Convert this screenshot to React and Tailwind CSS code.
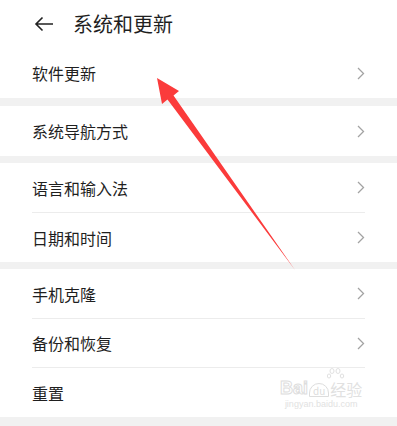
import React from "react";

const groups = [
  [["软件更新", 50]],
  [["系统导航方式", 50]],
  [["语言和输入法", 50], ["日期和时间", 49]],
  [["手机克隆", 50], ["备份和恢复", 49], ["重置", 49]],
];

const Chevron = () => (
  <svg width="8" height="13" viewBox="0 0 8 13" fill="none">
    <path d="M1 1l5.5 5.5L1 12" stroke="#a3a3a3" strokeWidth="1.3" />
  </svg>
);

const Row = ({ label, h, last }) => (
  <div className="px-8">
    <div
      className={`flex items-center justify-between ${
        h === 50 ? "h-[50px]" : "h-[49px]"
      } ${last ? "" : "border-b border-[#ececec]"}`}
    >
      <span className="text-[16px] text-[#1f1f1f]">{label}</span>
      {label !== "重置" && <Chevron />}
    </div>
  </div>
);

export default function App() {
  return (
    <div
      className="relative w-[397px] h-[426px] overflow-hidden bg-[#f1f1f1]"
      style={{ fontFamily: '"Noto Sans CJK SC", "Noto Sans", sans-serif' }}
    >
      <div className="bg-white h-[48px] flex items-center pl-[34px]">
        <svg width="20" height="16" viewBox="0 0 20 16" fill="none">
          <path d="M19 8H2M8.5 1.5L2 8l6.5 6.5" stroke="#222" strokeWidth="1.6" />
        </svg>
        <span className="ml-[19px] text-[20px] text-[#1f1f1f]">系统和更新</span>
      </div>

      <div className="flex flex-col">
        {groups.map((g, i) => (
          <div
            key={i}
            className={`bg-white ${i === 0 ? "" : i === 1 ? "mt-[8px]" : "mt-[7px]"}`}
          >
            {g.map(([label, h], j) => (
              <Row key={label} label={label} h={h} last={j === g.length - 1} />
            ))}
          </div>
        ))}
      </div>

      {/* red annotation arrow */}
      <svg
        className="absolute left-0 top-0 pointer-events-none"
        width="397"
        height="426"
        viewBox="0 0 397 426"
      >
        <polygon
          points="157,78 179,91 173.5,95.5 295,270 167.5,99.5 162,104"
          fill="#fb3b3b"
        />
      </svg>

      {/* watermark */}
      <div className="absolute left-[280px] top-[368px] flex flex-col items-center pointer-events-none opacity-50">
        <svg width="18" height="14" viewBox="0 0 18 14" className="ml-[30px] mb-[-3px]" fill="none" stroke="#c4c4c4" strokeWidth="1">
          <ellipse cx="5" cy="3" rx="2" ry="2.5" />
          <ellipse cx="11" cy="3" rx="2" ry="2.5" />
          <ellipse cx="2" cy="8" rx="1.7" ry="2" />
          <ellipse cx="15" cy="8" rx="1.7" ry="2" />
        </svg>
        <div className="flex items-end leading-none">
          <span
            className="text-[18px] font-bold text-white [-webkit-text-stroke:1px_#bdbdbd]"
            style={{ fontFamily: '"Liberation Sans", sans-serif' }}
          >
            Bai
          </span>
          <span className="mx-[1px] text-[10px] px-[3px] pt-[2px] rounded-t-full border border-[#bdbdbd] text-[#bdbdbd]">
            du
          </span>
          <span className="text-[16px] text-[#c4c4c4]">经验</span>
        </div>
        <span
          className="text-[9px] text-[#c4c4c4] leading-none mt-[3px]"
          style={{ fontFamily: '"Liberation Sans", sans-serif' }}
        >
          jingyan.baidu.com
        </span>
      </div>
    </div>
  );
}
